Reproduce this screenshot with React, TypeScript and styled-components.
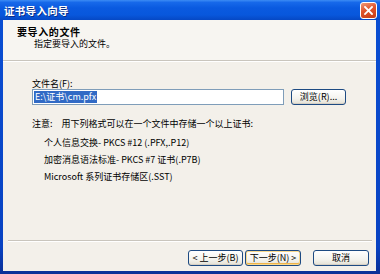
import React from "react";
import styled, { createGlobalStyle } from "styled-components";

const GlobalStyle = createGlobalStyle`
  html, body {
    margin: 0;
    padding: 0;
    background: #ffffff;
  }
  body {
    font-family: "Noto Sans CJK SC", "Liberation Sans", sans-serif;
    font-size: 9px;
    color: #000;
  }
`;

const Window = styled.div`
  width: 380px;
  height: 274px;
  display: flex;
  flex-direction: column;
  background: linear-gradient(180deg, #0a4fd4 0%, #0842c2 90%, #0a2f96 100%);
  overflow: hidden;
`;

const TitleBar = styled.div`
  height: 20px;
  flex: none;
  display: flex;
  align-items: center;
  justify-content: space-between;
  padding: 0 3px 0 4px;
  background: linear-gradient(
    180deg,
    #3c8cf4 0%,
    #1769ea 12%,
    #0a5ae0 40%,
    #0857dc 75%,
    #0648c4 100%
  );
`;

const Title = styled.span`
  color: #fff;
  font-weight: bold;
  font-size: 10.5px;
  letter-spacing: 0.3px;
  text-shadow: 1px 1px 0 #0a2f8a;
`;

const CloseBox = styled.div`
  width: 15px;
  height: 15px;
  border: 1px solid #fff;
  border-radius: 3px;
  background: linear-gradient(160deg, #f09a78 0%, #e0532b 45%, #c43d17 100%);
  display: flex;
  align-items: center;
  justify-content: center;
`;

const Frame = styled.div`
  flex: 1;
  margin: 0 4px 3px 3px;
  background: #f3f0ea;
  display: flex;
  flex-direction: column;
`;

const Header = styled.div`
  background: #f7f5f1;
  padding: 6px 0 10px 14px;
  border-bottom: 1px solid #c9c5bd;
  box-shadow: 0 1px 0 #ffffff;
`;

const Heading = styled.div`
  font-weight: bold;
  font-size: 10px;
  line-height: 12px;
  letter-spacing: 0.6px;
`;

const SubHeading = styled.div`
  line-height: 12px;
  padding-left: 17px;
`;

const Content = styled.div`
  flex: 1;
  padding: 17px 0 0 29px;
`;

const Label = styled.div`
  line-height: 11px;
`;

const FileRow = styled.div`
  display: flex;
  align-items: center;
  gap: 7px;
`;

const Field = styled.div`
  width: 249px;
  height: 14px;
  border: 1px solid #7f9db9;
  background: #fff;
  display: flex;
  align-items: center;
  padding-left: 1px;
`;

const Selected = styled.span`
  background: #316ac5;
  color: #fff;
  line-height: 12px;
  padding: 0 1px;
`;

const Button = styled.div<{ $default?: boolean; $width?: number }>`
  width: ${p => p.$width ?? 55}px;
  height: 16px;
  box-sizing: border-box;
  border: 1px solid #1d4a82;
  border-radius: 3px;
  background: linear-gradient(180deg, #ffffff 0%, #f4f3ee 60%, #e3e0d4 100%);
  display: flex;
  align-items: center;
  justify-content: center;
  line-height: 12px;
  box-shadow: ${p =>
    p.$default
      ? "inset 0 0 0 1px #f9d98d, inset 0 -1px 0 1px #eeb34a"
      : "inset 0 -1px 0 #d6d0c5"};
`;

const Note = styled.div`
  margin-top: 13px;
  line-height: 12px;
  white-space: nowrap;
`;

const NoteLead = styled.span`
  margin-right: 9px;
`;

const FormatList = styled.div`
  margin-top: 4px;
  padding-left: 12px;
`;

const Format = styled.div`
  line-height: 17px;
  white-space: nowrap;
`;

const Separator = styled.div`
  margin: 0 4px 0 5px;
  border-top: 1px solid #c9c5bd;
  border-bottom: 1px solid #ffffff;
`;

const Footer = styled.div`
  display: flex;
  justify-content: flex-end;
  align-items: center;
  padding: 8px 7px 5px 0;
  gap: 2px;
`;

const CancelGap = styled.div`
  width: 8px;
`;

const formats = [
  "个人信息交换- PKCS #12 (.PFX,.P12)",
  "加密消息语法标准- PKCS #7 证书(.P7B)",
  "Microsoft 系列证书存储区(.SST)",
];

const App: React.FC = () => {
  return (
    <>
      <GlobalStyle />
      <Window>
        <TitleBar>
          <Title>证书导入向导</Title>
          <CloseBox>
            <svg width="9" height="9" viewBox="0 0 9 9">
              <path
                d="M1 1 L8 8 M8 1 L1 8"
                stroke="#fff"
                strokeWidth="1.8"
                strokeLinecap="square"
              />
            </svg>
          </CloseBox>
        </TitleBar>
        <Frame>
          <Header>
            <Heading>要导入的文件</Heading>
            <SubHeading>指定要导入的文件。</SubHeading>
          </Header>
          <Content>
            <Label>文件名(F):</Label>
            <FileRow>
              <Field>
                <Selected>E:\证书\cm.pfx</Selected>
              </Field>
              <Button>浏览(R)...</Button>
            </FileRow>
            <Note>
              <NoteLead>注意:</NoteLead>
              用下列格式可以在一个文件中存储一个以上证书:
            </Note>
            <FormatList>
              {formats.map(f => (
                <Format key={f}>{f}</Format>
              ))}
            </FormatList>
          </Content>
          <Separator />
          <Footer>
            <Button>&lt; 上一步(B)</Button>
            <Button $default $width={56}>
              下一步(N) &gt;
            </Button>
            <CancelGap />
            <Button $width={56}>取消</Button>
          </Footer>
        </Frame>
      </Window>
    </>
  );
};

export default App;
